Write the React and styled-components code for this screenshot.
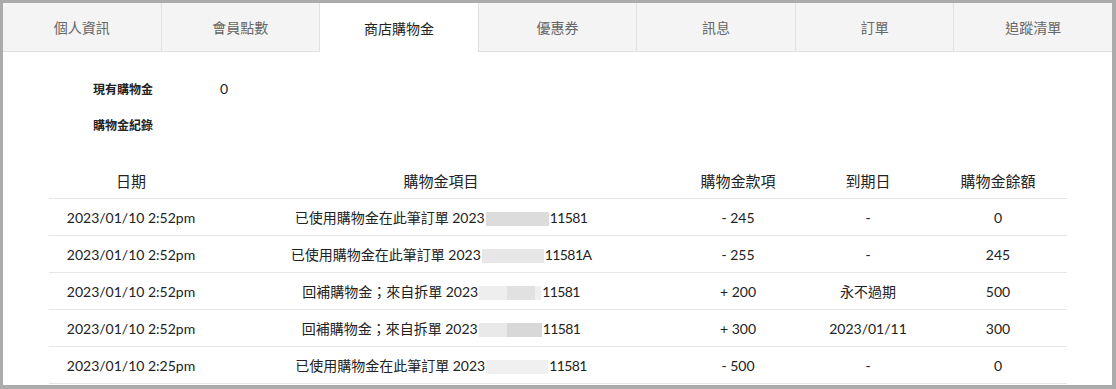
import styled, { createGlobalStyle } from 'styled-components';

const GlobalStyle = createGlobalStyle`
  html, body {
    margin: 0;
    padding: 0;
    background: #ababab;
  }
  body {
    font-family: Lato, "Noto Sans CJK TC", sans-serif;
    color: #222;
  }
`;

const Frame = styled.div`
  margin: 3px 4px 4px 3px;
  height: 382px;
  background: #fff;
  overflow: hidden;
`;

const TabBar = styled.div`
  display: flex;
  height: 48px;
  border-bottom: 1px solid #dedede;
  background: #f4f4f4;
`;

const Tab = styled.div`
  flex: 1;
  display: flex;
  align-items: center;
  justify-content: center;
  font-size: 14px;
  color: ${props => (props.active ? '#222' : '#666')};
  background: ${props => (props.active ? '#fff' : '#f4f4f4')};
  border-right: 1px solid #e2e2e2;
  margin-bottom: ${props => (props.active ? '-1px' : '0')};
  &:last-child {
    border-right: none;
  }
`;

const Content = styled.div`
  padding: 18px 45px 0 46px;
`;

const Summary = styled.div`
  display: grid;
  grid-template-columns: 127px auto;
  grid-auto-rows: 36px;
  align-items: center;
  padding-left: 44px;
  margin-bottom: 20px;
`;

const Label = styled.div`
  font-size: 12px;
  font-weight: 700;
  color: #222;
`;

const Value = styled.div`
  font-size: 14px;
`;

const Table = styled.table`
  width: 100%;
  border-collapse: collapse;
  table-layout: fixed;
`;

const Th = styled.th`
  height: 36px;
  font-size: 15px;
  font-weight: 400;
  text-align: center;
  border-bottom: 1px solid #e6e6e6;
  padding: 0;
`;

const Td = styled.td`
  height: 36px;
  font-size: 14px;
  text-align: center;
  border-bottom: 1px solid #e6e6e6;
  padding: 0;
  white-space: nowrap;
`;

const Redacted = styled.span`
  display: inline-block;
  vertical-align: middle;
  width: ${props => props.w || 62}px;
  height: 14px;
  margin: 0 1px 0 1px;
  background: ${props => props.bg};
`;

const Tail = styled.span`
  letter-spacing: -0.6px;
`;

const cols = [164, 456, 138, 122, 138];

const records = [
  { date: '2023/01/10 2:52pm', item: '已使用購物金在此筆訂單 2023', tail: '11581', amount: '- 245', expiry: '-', balance: '0', bg: '#dcdcdc', w: 63 },
  { date: '2023/01/10 2:52pm', item: '已使用購物金在此筆訂單 2023', tail: '11581A', amount: '- 255', expiry: '-', balance: '245', bg: '#e7e7e7', w: 62 },
  { date: '2023/01/10 2:52pm', item: '回補購物金；來自拆單 2023', tail: '11581', amount: '+ 200', expiry: '永不過期', balance: '500', bg: 'linear-gradient(90deg, #eeeeee 0 45%, #e1e1e1 45% 90%, #efefef 90%)', w: 62 },
  { date: '2023/01/10 2:52pm', item: '回補購物金；來自拆單 2023', tail: '11581', amount: '+ 300', expiry: '2023/01/11', balance: '300', bg: 'linear-gradient(90deg, #e9e9e9 0 45%, #d8d8d8 45%)', w: 63 },
  { date: '2023/01/10 2:25pm', item: '已使用購物金在此筆訂單 2023', tail: '11581', amount: '- 500', expiry: '-', balance: '0', bg: '#f0f0f0', w: 62 },
];

const tabs = ['個人資訊', '會員點數', '商店購物金', '優惠券', '訊息', '訂單', '追蹤清單'];

export default function App() {
  return (
    <>
      <GlobalStyle />
      <Frame>
        <TabBar>
          {tabs.map(t => (
            <Tab key={t} active={t === '商店購物金'}>
              {t}
            </Tab>
          ))}
        </TabBar>
        <Content>
          <Summary>
            <Label>現有購物金</Label>
            <Value>0</Value>
            <Label>購物金紀錄</Label>
            <div />
          </Summary>
          <Table>
            <colgroup>
              {cols.map((w, i) => (
                <col key={i} style={{ width: w }} />
              ))}
            </colgroup>
            <thead>
              <tr>
                <Th>日期</Th>
                <Th>購物金項目</Th>
                <Th>購物金款項</Th>
                <Th>到期日</Th>
                <Th>購物金餘額</Th>
              </tr>
            </thead>
            <tbody>
              {records.map((r, i) => (
                <tr key={i}>
                  <Td>{r.date}</Td>
                  <Td>
                    {r.item}
                    <Redacted bg={r.bg} w={r.w} />
                    <Tail>{r.tail}</Tail>
                  </Td>
                  <Td>{r.amount}</Td>
                  <Td>{r.expiry}</Td>
                  <Td>{r.balance}</Td>
                </tr>
              ))}
            </tbody>
          </Table>
        </Content>
      </Frame>
    </>
  );
}
